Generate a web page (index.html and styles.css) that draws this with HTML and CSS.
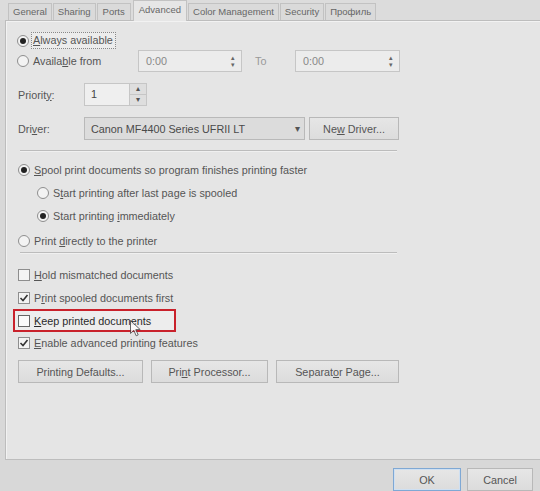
FILE: index.html
```html
<!DOCTYPE html>
<html lang="en">
<head>
    <meta charset="UTF-8">
    <title>Printer Properties - Advanced</title>
    <link rel="stylesheet" href="styles.css">
</head>
<body>

    <div class="janela">

        <div class="abas">
            <span class="aba">General</span>
            <span class="aba">Sharing</span>
            <span class="aba">Ports</span>
            <span class="aba ativa">Advanced</span>
            <span class="aba">Color Management</span>
            <span class="aba">Security</span>
            <span class="aba">Профиль</span>
        </div>

        <div class="painel">

            <div class="linha l-sempre">
                <span class="radio marcado"></span>
                <span class="foco"><u>A</u>lways available</span>
            </div>

            <div class="linha l-de">
                <div class="opcao largura-de">
                    <span class="radio"></span>
                    <span>Availa<u>b</u>le from</span>
                </div>
                <div class="hora">
                    <span>0:00</span>
                    <span class="setas">▴<br>▾</span>
                </div>
                <span class="para">To</span>
                <div class="hora hora2">
                    <span>0:00</span>
                    <span class="setas">▴<br>▾</span>
                </div>
            </div>

            <div class="linha l-prioridade">
                <span class="rotulo">Priorit<u>y</u>:</span>
                <div class="spin">
                    <span class="spin-valor">1</span>
                    <span class="spin-botoes">
                        <span>▴</span>
                        <span>▾</span>
                    </span>
                </div>
            </div>

            <div class="linha l-driver">
                <span class="rotulo">Dri<u>v</u>er:</span>
                <div class="combo">
                    <span>Canon MF4400 Series UFRII LT</span>
                    <span class="combo-seta">▾</span>
                </div>
                <button class="botao b-driver">Ne<u>w</u> Driver...</button>
            </div>

            <div class="separador s1"></div>

            <div class="grupo-radio">
                <div class="linha l-opcao">
                    <span class="radio marcado"></span>
                    <span><u>S</u>pool print documents so program finishes printing faster</span>
                </div>
                <div class="linha l-opcao recuo">
                    <span class="radio"></span>
                    <span>S<u>t</u>art printing after last page is spooled</span>
                </div>
                <div class="linha l-opcao recuo">
                    <span class="radio marcado"></span>
                    <span>Start printing <u>i</u>mmediately</span>
                </div>
                <div class="linha l-opcao l-direto">
                    <span class="radio"></span>
                    <span>Print <u>d</u>irectly to the printer</span>
                </div>
            </div>

            <div class="separador s2"></div>

            <div class="grupo-check">
                <div class="linha l-opcao">
                    <span class="check"></span>
                    <span><u>H</u>old mismatched documents</span>
                </div>
                <div class="linha l-opcao">
                    <span class="check marcado">
                        <svg viewBox="0 0 10 10" width="10" height="10"><path d="M1.5 5 L4 7.5 L8.5 2" fill="none" stroke="#333" stroke-width="1.6"/></svg>
                    </span>
                    <span>P<u>r</u>int spooled documents first</span>
                </div>
                <div class="linha l-opcao destaque">
                    <span class="check"></span>
                    <span><u>K</u>eep printed documents</span>
                </div>
                <div class="linha l-opcao l-avancado">
                    <span class="check marcado">
                        <svg viewBox="0 0 10 10" width="10" height="10"><path d="M1.5 5 L4 7.5 L8.5 2" fill="none" stroke="#333" stroke-width="1.6"/></svg>
                    </span>
                    <span><u>E</u>nable advanced printing features</span>
                </div>
            </div>

            <div class="botoes">
                <button class="botao b-padroes">Printing Defaults...</button>
                <button class="botao b-processador">Pri<u>n</u>t Processor...</button>
                <button class="botao b-separador">Separat<u>o</u>r Page...</button>
            </div>

        </div>

        <div class="rodape">
            <button class="botao b-ok">OK</button>
            <button class="botao b-cancelar">Cancel</button>
        </div>

        <svg class="cursor" viewBox="0 0 11 17" width="11" height="17">
            <path d="M0.5 0.5 L0.5 13.5 L3.8 10.4 L6.2 15.8 L8.2 14.9 L5.8 9.6 L10.2 9.6 Z" fill="#fff" stroke="#444" stroke-width="1"/>
        </svg>

    </div>

</body>
</html>
```

FILE: styles.css
```css
* {
    margin: 0;
    padding: 0;
    box-sizing: border-box;
}

body {
    background: #d8d8d8;
    font-family: "Liberation Sans", Arial, sans-serif;
    font-size: 10.8px;
    color: #555;
    width: 540px;
    height: 491px;
    overflow: hidden;
}

.janela {
    position: relative;
    width: 540px;
    height: 491px;
}

/* abas */

.abas {
    display: flex;
    align-items: flex-end;
    gap: 1px;
    height: 20px;
    padding-left: 8px;
    background: #dcdcdc;
}

.aba {
    height: 17px;
    padding: 0 4px;
    font-size: 9.5px;
    line-height: 16px;
    color: #666;
    background: #dadada;
    border: 1px solid #c2c2c2;
    border-bottom: none;
}

.aba:nth-child(3) {
    padding: 0 5px;
}

.aba.ativa {
    height: 21px;
    margin: 0 0 -1px 1px;
    padding: 0 5px;
    line-height: 18px;
    background: #e6e6e6;
    position: relative;
    z-index: 1;
}

/* painel */

.painel {
    margin-left: 5px;
    height: 440px;
    background: #e5e5e5;
    border: 1px solid #bdbdbd;
    border-right: none;
    box-shadow: inset 1px 1px 0 #f2f2f2;
    padding-left: 11px;
}

.linha {
    display: flex;
    align-items: center;
}

.radio {
    width: 12px;
    height: 12px;
    border-radius: 50%;
    border: 1px solid #8e8e8e;
    background: #f3f3f3;
    margin-right: 4px;
    flex-shrink: 0;
    display: flex;
    align-items: center;
    justify-content: center;
}

.radio.marcado::after {
    content: "";
    width: 6px;
    height: 6px;
    border-radius: 50%;
    background: #222;
}

.check {
    width: 12px;
    height: 12px;
    border: 1px solid #8e8e8e;
    background: #f3f3f3;
    margin-right: 4px;
    flex-shrink: 0;
    display: flex;
    align-items: center;
    justify-content: center;
}

.l-sempre {
    margin-top: 11px;
    height: 17px;
}

.foco {
    border: 1px dotted #888;
    background: #ececec;
    padding: 0 2px 0 1px;
    margin-left: -2px;
    line-height: 15px;
}

.l-de {
    margin-top: 1px;
    height: 22px;
}

.largura-de {
    display: flex;
    align-items: center;
    width: 121px;
}

.hora {
    width: 104px;
    height: 22px;
    background: #ececec;
    border: 1px solid #c6c6c6;
    display: flex;
    align-items: center;
    justify-content: space-between;
    padding: 0 6px 0 7px;
    color: #888;
}

.hora2 {
    width: 105px;
}

.setas {
    font-size: 7px;
    line-height: 7px;
    color: #666;
}

.para {
    width: 53px;
    padding-left: 13px;
    color: #999;
}

.rotulo {
    width: 67px;
    padding-left: 1px;
}

.l-prioridade {
    margin-top: 11px;
    height: 23px;
}

.spin {
    display: flex;
    height: 23px;
}

.spin-valor {
    width: 46px;
    background: #efefef;
    border: 1px solid #c6c6c6;
    padding: 4px 0 0 6px;
    color: #444;
}

.spin-botoes {
    width: 17px;
    display: flex;
    flex-direction: column;
    border: 1px solid #c6c6c6;
    border-left: none;
    background: #dedede;
}

.spin-botoes span {
    flex: 1;
    font-size: 8px;
    line-height: 10px;
    text-align: center;
    color: #555;
}

.spin-botoes span + span {
    border-top: 1px solid #c6c6c6;
}

.l-driver {
    margin-top: 11px;
    height: 23px;
}

.combo {
    width: 221px;
    height: 23px;
    background: #dcdcdc;
    border: 1px solid #b9b9b9;
    display: flex;
    align-items: center;
    justify-content: space-between;
    padding: 0 4px 0 6px;
    color: #4a4a4a;
}

.combo-seta {
    font-size: 10px;
    color: #555;
}

.botao {
    font-family: "Liberation Sans", Arial, sans-serif;
    font-size: 10.8px;
    color: #555;
    height: 23px;
    background: linear-gradient(#e6e6e6, #dcdcdc);
    border: 1px solid #b8b8b8;
}

.b-driver {
    width: 90px;
    margin-left: 4px;
}

.separador {
    width: 377px;
    margin-left: 3px;
    height: 2px;
    border-top: 1px solid #bcbcbc;
    border-bottom: 1px solid #f0f0f0;
}

.s1 {
    margin-top: 10px;
}

.grupo-radio {
    margin-top: 6px;
}

.l-opcao {
    height: 23px;
    padding-left: 1px;
}

.recuo {
    padding-left: 20px;
}

.l-direto {
    margin-top: 2px;
}

.s2 {
    margin-top: 0;
}

.grupo-check {
    margin-top: 9px;
}

.destaque {
    height: 23px;
    width: 163px;
    margin-left: -4px;
    padding-left: 3px;
    border: 2px solid #c9212b;
    font-size: 10.8px;
    color: #2a2a2a;
    background: #ededed;
}

.destaque .check {
    border-color: #666;
    background: #fafafa;
}

.l-avancado {
    height: 21px;
}

.botoes {
    display: flex;
    gap: 8px;
    margin-top: 7px;
    padding-left: 1px;
}

.b-padroes {
    width: 125px;
}

.b-processador {
    width: 117px;
}

.b-separador {
    width: 123px;
}

/* rodape */

.rodape {
    display: flex;
    justify-content: flex-end;
    gap: 6px;
    padding: 8px 7px 0 0;
}

.b-ok {
    width: 68px;
    border-color: #7fa8d4;
    box-shadow: inset 0 0 0 1px #cfe0f2;
}

.b-cancelar {
    width: 66px;
}

.cursor {
    position: absolute;
    left: 130px;
    top: 320px;
    opacity: 0.8;
}
```
